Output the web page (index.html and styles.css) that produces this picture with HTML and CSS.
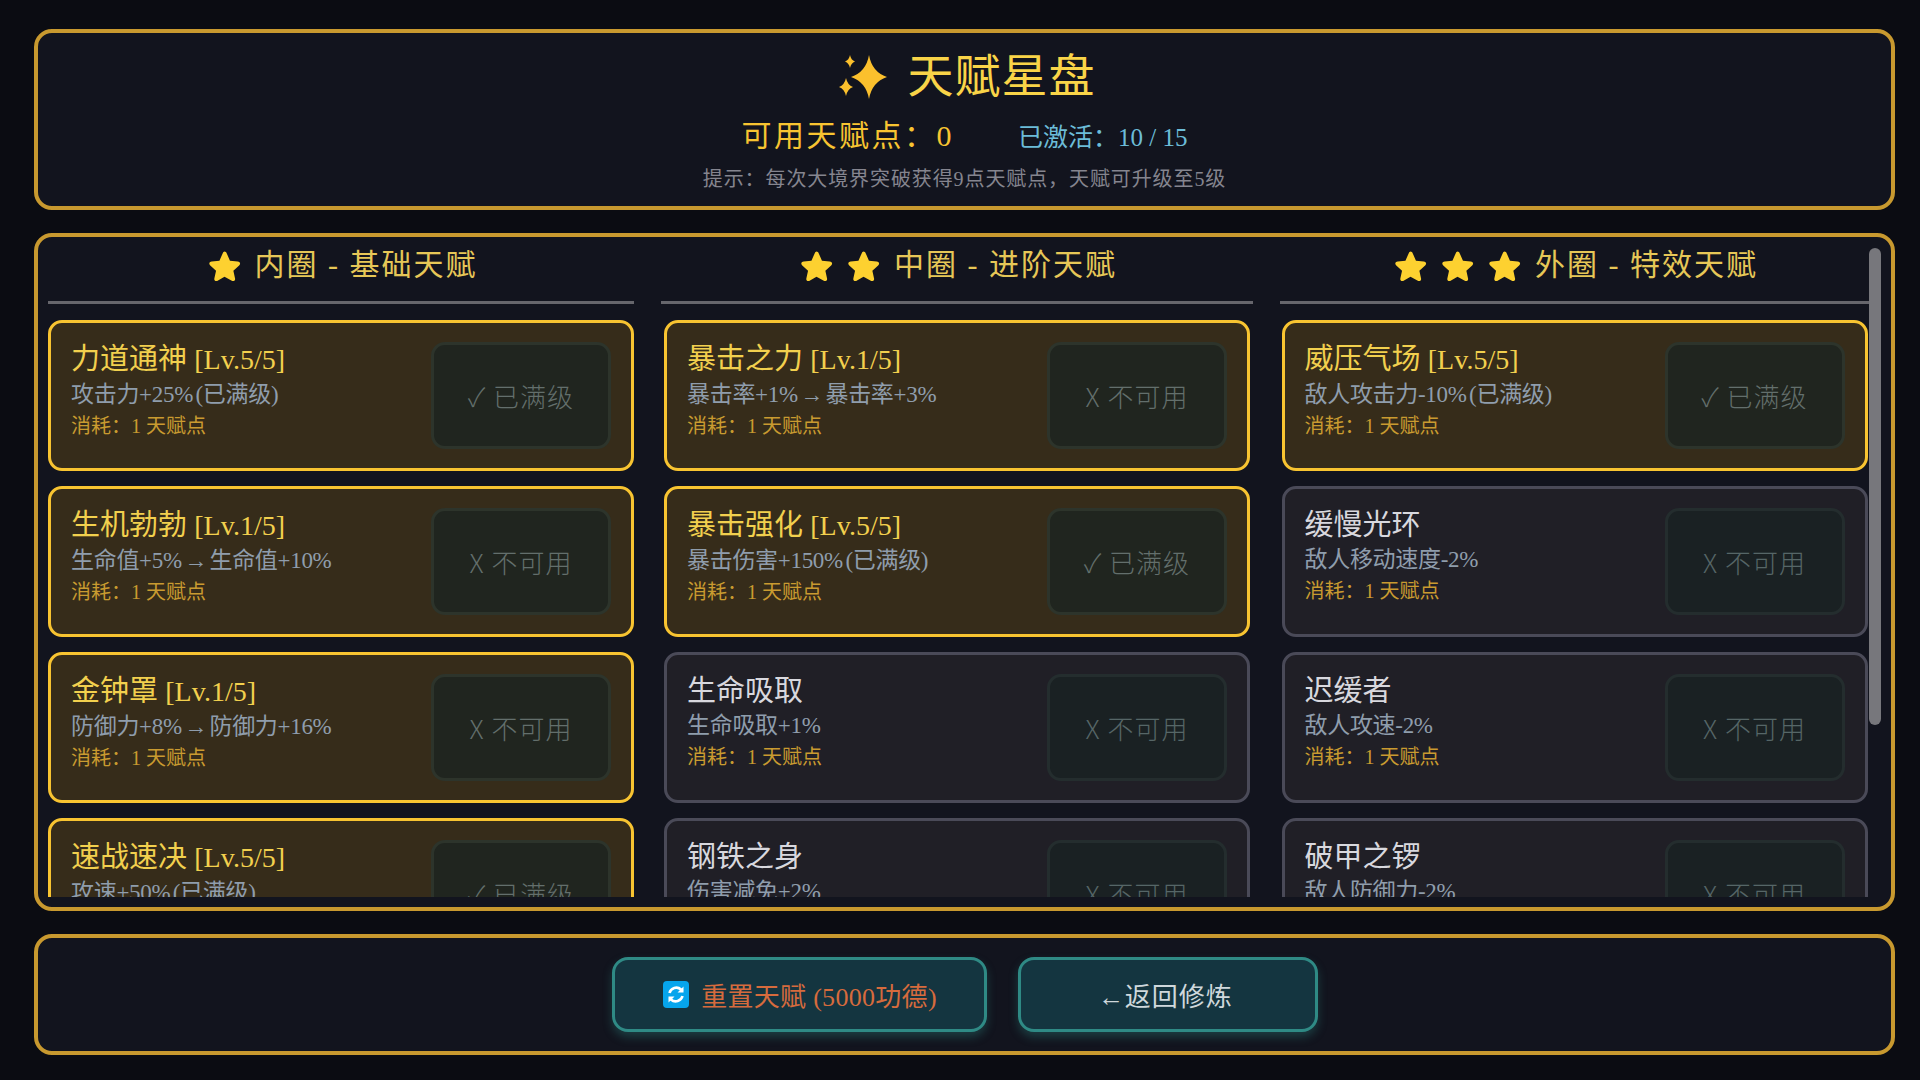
FILE: index.html
```html
<!DOCTYPE html>
<html lang="zh-CN">
<head>
    <meta charset="UTF-8">
    <title>天赋星盘</title>
    <link rel="stylesheet" href="styles.css">
</head>
<body>
    <svg class="defs" width="0" height="0">
        <symbol id="star" viewBox="0 0 32 30">
            <path d="M16 1.5c1 0 1.700.700 2.200 1.800l3.100 7 7.500.800c2.400.300 3.100 2.200 1.400 3.800l-5.600 5.100 1.600 7.400c.500 2.300-1.100 3.500-3.100 2.300L16 26l-6.700 3.700c-2 1.200-3.600 0-3.100-2.300l1.600-7.400-5.600-5.100c-1.700-1.600-1-3.500 1.400-3.800l7.500-.800 3.100-7c.500-1.100 1.200-1.800 1.800-1.800z"/>
        </symbol>
    </svg>

    <header class="panel page-head">
        <h1>
            <svg class="sparkle" viewBox="0 0 48 44">
                <path d="M30 0Q33 17 48 22Q33 27 30 44Q27 27 12 22Q27 17 30 0Z"/>
                <path d="M11 0Q12 5 16 6.500Q12 8 11 13Q10 8 6 6.500Q10 5 11 0Z"/>
                <path d="M7 23Q8.500 30 14 32Q8.500 34 7 41Q5.500 34 0 32Q5.500 30 7 23Z"/>
            </svg>
            天赋星盘
        </h1>
        <div class="stats">
            <span class="points">可用天赋点：0</span>
            <span class="active-count">已激活：10 / 15</span>
        </div>
        <p class="hint">提示：每次大境界突破获得9点天赋点，天赋可升级至5级</p>
    </header>

    <main class="panel tree-panel">
        <div class="tree-scroll">
            <section class="tier">
                <h2><svg class="star"><use href="#star"/></svg>内圈 - 基础天赋</h2>
                <div class="card learned">
                    <div class="info">
                        <div class="name">力道通神 <span class="level">[Lv.5/5]</span></div>
                        <div class="effect">攻击力+25% (已满级)</div>
                        <div class="cost">消耗：1 天赋点</div>
                    </div>
                    <button class="upgrade">✓ 已满级</button>
                </div>
                <div class="card learned">
                    <div class="info">
                        <div class="name">生机勃勃 <span class="level">[Lv.1/5]</span></div>
                        <div class="effect">生命值+5% → 生命值+10%</div>
                        <div class="cost">消耗：1 天赋点</div>
                    </div>
                    <button class="upgrade">X 不可用</button>
                </div>
                <div class="card learned">
                    <div class="info">
                        <div class="name">金钟罩 <span class="level">[Lv.1/5]</span></div>
                        <div class="effect">防御力+8% → 防御力+16%</div>
                        <div class="cost">消耗：1 天赋点</div>
                    </div>
                    <button class="upgrade">X 不可用</button>
                </div>
                <div class="card learned">
                    <div class="info">
                        <div class="name">速战速决 <span class="level">[Lv.5/5]</span></div>
                        <div class="effect">攻速+50% (已满级)</div>
                        <div class="cost">消耗：1 天赋点</div>
                    </div>
                    <button class="upgrade">✓ 已满级</button>
                </div>
                <div class="card learned">
                    <div class="info">
                        <div class="name">灵气充盈 <span class="level">[Lv.1/5]</span></div>
                        <div class="effect">灵气+5% → 灵气+10%</div>
                        <div class="cost">消耗：1 天赋点</div>
                    </div>
                    <button class="upgrade">X 不可用</button>
                </div>
            </section>

            <section class="tier">
                <h2><svg class="star"><use href="#star"/></svg><svg class="star"><use href="#star"/></svg>中圈 - 进阶天赋</h2>
                <div class="card learned">
                    <div class="info">
                        <div class="name">暴击之力 <span class="level">[Lv.1/5]</span></div>
                        <div class="effect">暴击率+1% → 暴击率+3%</div>
                        <div class="cost">消耗：1 天赋点</div>
                    </div>
                    <button class="upgrade">X 不可用</button>
                </div>
                <div class="card learned">
                    <div class="info">
                        <div class="name">暴击强化 <span class="level">[Lv.5/5]</span></div>
                        <div class="effect">暴击伤害+150% (已满级)</div>
                        <div class="cost">消耗：1 天赋点</div>
                    </div>
                    <button class="upgrade">✓ 已满级</button>
                </div>
                <div class="card">
                    <div class="info">
                        <div class="name">生命吸取</div>
                        <div class="effect">生命吸取+1%</div>
                        <div class="cost">消耗：1 天赋点</div>
                    </div>
                    <button class="upgrade">X 不可用</button>
                </div>
                <div class="card">
                    <div class="info">
                        <div class="name">钢铁之身</div>
                        <div class="effect">伤害减免+2%</div>
                        <div class="cost">消耗：1 天赋点</div>
                    </div>
                    <button class="upgrade">X 不可用</button>
                </div>
                <div class="card">
                    <div class="info">
                        <div class="name">回春之力</div>
                        <div class="effect">生命恢复+2%</div>
                        <div class="cost">消耗：1 天赋点</div>
                    </div>
                    <button class="upgrade">X 不可用</button>
                </div>
            </section>

            <section class="tier">
                <h2><svg class="star"><use href="#star"/></svg><svg class="star"><use href="#star"/></svg><svg class="star"><use href="#star"/></svg>外圈 - 特效天赋</h2>
                <div class="card learned">
                    <div class="info">
                        <div class="name">威压气场 <span class="level">[Lv.5/5]</span></div>
                        <div class="effect">敌人攻击力-10% (已满级)</div>
                        <div class="cost">消耗：1 天赋点</div>
                    </div>
                    <button class="upgrade">✓ 已满级</button>
                </div>
                <div class="card">
                    <div class="info">
                        <div class="name">缓慢光环</div>
                        <div class="effect">敌人移动速度-2%</div>
                        <div class="cost">消耗：1 天赋点</div>
                    </div>
                    <button class="upgrade">X 不可用</button>
                </div>
                <div class="card">
                    <div class="info">
                        <div class="name">迟缓者</div>
                        <div class="effect">敌人攻速-2%</div>
                        <div class="cost">消耗：1 天赋点</div>
                    </div>
                    <button class="upgrade">X 不可用</button>
                </div>
                <div class="card">
                    <div class="info">
                        <div class="name">破甲之锣</div>
                        <div class="effect">敌人防御力-2%</div>
                        <div class="cost">消耗：1 天赋点</div>
                    </div>
                    <button class="upgrade">X 不可用</button>
                </div>
                <div class="card">
                    <div class="info">
                        <div class="name">虚弱诅咒</div>
                        <div class="effect">敌人伤害-2%</div>
                        <div class="cost">消耗：1 天赋点</div>
                    </div>
                    <button class="upgrade">X 不可用</button>
                </div>
            </section>
        </div>
        <div class="scroll-thumb"></div>
    </main>

    <footer class="panel page-foot">
        <button class="action reset">
            <svg class="reset-icon" viewBox="0 0 26 27">
                <rect width="26" height="27" rx="4"/>
                <path class="arrows" d="M6.500 12a7 7 0 0 1 11.500-3.500l1.500 1.500M19.500 15a7 7 0 0 1-11.500 3.500l-1.500-1.500"/>
                <path class="heads" d="M20.500 5.500v6h-6zM5.500 21.500v-6h6z"/>
            </svg>
            重置天赋 (5000功德)
        </button>
        <button class="action back">← 返回修炼</button>
    </footer>
</body>
</html>
```

FILE: styles.css
```css
:root {
    --frame: #c8992f;
    --gold: #f8c431;
    --panel: #12141e;
}

* {
    box-sizing: border-box;
    margin: 0;
    padding: 0;
}

html, body {
    height: 100%;
}

body {
    display: flex;
    flex-direction: column;
    gap: 23px;
    padding: 29px 25px 25px 34px;
    background: #0b0c12;
    font-family: "Liberation Serif", "Noto Sans CJK SC", serif;
    overflow: hidden;
}

.defs {
    position: absolute;
}

.panel {
    background: var(--panel);
    border: 4px solid var(--frame);
    border-radius: 18px;
}

/* 顶部标题 */
.page-head {
    height: 181px;
    flex: none;
    text-align: center;
}

h1 {
    height: 52px;
    margin-top: 18px;
    padding-left: 5px;
    display: flex;
    justify-content: center;
    align-items: center;
    gap: 21px;
    color: #f9d448;
    font-size: 46px;
    font-weight: 400;
    line-height: 52px;
    letter-spacing: 1px;
}

.sparkle {
    width: 48px;
    height: 44px;
    fill: #fbc02d;
}

.stats {
    margin-top: 15px;
    display: flex;
    justify-content: center;
    align-items: baseline;
    gap: 64px;
    line-height: 36px;
}

.points {
    color: var(--gold);
    font-size: 30px;
    letter-spacing: 2.500px;
}

.active-count {
    color: #6cbcd8;
    font-size: 25px;
}

.hint {
    margin-top: 9px;
    color: #85858f;
    font-size: 20px;
    line-height: 28px;
    letter-spacing: .9px;
}

/* 天赋列表 */
.tree-panel {
    position: relative;
    flex: 1;
    min-height: 0;
    padding: 10px;
}

.tree-scroll {
    height: 100%;
    padding-right: 12px;
    display: grid;
    grid-template-columns: 586fr 592fr 589fr;
    gap: 27px;
    overflow: hidden;
}

/* 截图里隐藏了滚动条，滑块单独画 */
.scroll-thumb {
    position: absolute;
    top: 11px;
    right: 10px;
    width: 12px;
    height: 477px;
    background: #77777c;
    border-radius: 6px;
}

.tier {
    display: flex;
    flex-direction: column;
    align-items: center;
    gap: 15px;
}

h2 {
    align-self: stretch;
    height: 57px;
    margin-bottom: 1px;
    padding-left: 3px;
    display: flex;
    justify-content: center;
    align-items: flex-start;
    border-bottom: 3px solid #66666c;
    color: #e6c757;
    font-size: 30px;
    font-weight: 400;
    line-height: 36px;
    letter-spacing: 2px;
}

.star {
    width: 33px;
    height: 31px;
    margin: 3px 14px 0 0;
    fill: #fdd130;
}

.card {
    width: 586px;
    height: 151px;
    flex: none;
    display: flex;
    justify-content: space-between;
    align-items: center;
    padding: 20px;
    background: #201f26;
    border: 3px solid #4a4a58;
    border-radius: 14px;
}

.card.learned {
    background: #362c1a;
    border-color: var(--gold);
}

.info {
    align-self: flex-start;
    padding-top: 1px;
}

.name {
    color: #d8d8de;
    font-size: 29px;
    line-height: 30px;
}

.learned .name {
    color: #f2d04e;
}

.level {
    font-size: 28px;
}

.effect {
    margin-top: 5px;
    color: #8f9dac;
    font-size: 23px;
    line-height: 30px;
    letter-spacing: -.3px;
    word-spacing: -3px;
}

.cost {
    margin-top: 3px;
    color: #c99b30;
    font-size: 20px;
    line-height: 26px;
}

.upgrade {
    flex: none;
    width: 180px;
    height: 107px;
    background: #1a2123;
    border: 3px solid #242d2e;
    border-radius: 14px;
    color: #566667;
    font-family: "Noto Sans CJK SC", sans-serif;
    font-size: 26px;
    font-weight: 300;
    letter-spacing: 1px;
}

.learned .upgrade {
    background: #20251f;
    border-color: #2d342b;
    color: #636f6c;
}

/* 底部按钮 */
.page-foot {
    height: 121px;
    flex: none;
    display: flex;
    justify-content: center;
    align-items: center;
    gap: 31px;
    padding-bottom: 1px;
}

.action {
    height: 75px;
    display: flex;
    justify-content: center;
    align-items: center;
    gap: 12px;
    background: #143540;
    border: 3px solid #2f8a85;
    border-radius: 16px;
    box-shadow: 0 5px 10px rgba(47, 138, 133, .35);
    font-family: inherit;
    font-size: 26px;
}

.reset {
    width: 375px;
    padding-left: 2px;
    color: #d66b3d;
    letter-spacing: .3px;
}

.back {
    width: 300px;
    padding-right: 4px;
    color: #cfd8dc;
    letter-spacing: 1px;
    word-spacing: -8px;
}

.reset-icon {
    width: 26px;
    height: 27px;
    fill: #06a5ec;
}

.reset-icon .arrows {
    fill: none;
    stroke: #fff;
    stroke-width: 2.600;
}

.reset-icon .heads {
    fill: #fff;
}
```
